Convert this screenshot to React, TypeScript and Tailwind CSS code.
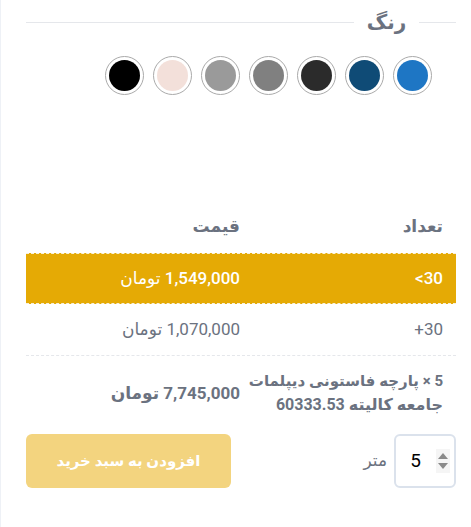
import React from 'react';

const swatches = ['#1e76c4', '#0f4b76', '#2b2b2b', '#808080', '#9a9a9a', '#f3e0da', '#000000'];

const App = () => {
  return (
    <div
      dir="rtl"
      className="w-[471px] h-[527px] bg-white border-l border-[#eef1f6] text-[#6b7280]"
      style={{ fontFamily: 'Roboto, "DejaVu Sans", sans-serif' }}
    >
      <div className="pr-[15px] pl-[25px] pt-[9px]">
        {/* Color heading */}
        <div className="flex items-center h-[26px]">
          <div className="w-[37px] h-px bg-[#e5e7eb]" />
          <span className="w-[65px] text-center text-[20px] font-bold text-[#6b7280] leading-none">رنگ</span>
          <div className="flex-1 h-px bg-[#e5e7eb]" />
        </div>

        {/* Swatches */}
        <div className="flex gap-[9px] pr-[24px] mt-[21px]">
          {swatches.map((c) => (
            <div
              key={c}
              className="w-[39px] h-[39px] rounded-full border border-[#aaaaaa] p-[3px] bg-white"
            >
              <div className="w-full h-full rounded-full" style={{ backgroundColor: c }} />
            </div>
          ))}
        </div>

        {/* Price table */}
        <div className="mt-[106px] text-[17px]">
          <div className="grid grid-cols-[203px_1fr] h-[52px] items-center font-bold text-[#6b7280]">
            <div className="pr-[13px]">تعداد</div>
            <div className="pr-[13px]">قیمت</div>
          </div>
          <div className="grid grid-cols-[203px_1fr] h-[51px] items-center bg-[#e5aa05] text-white font-medium border-y border-dashed border-[#f8f1dc]">
            <div className="pr-[13px]" dir="ltr" style={{ textAlign: 'right' }}>&lt;30</div>
            <div className="pr-[13px]">1,549,000 تومان</div>
          </div>
          <div className="grid grid-cols-[203px_1fr] h-[52px] items-center text-[#6b7280] border-b border-dashed border-[#e5e7eb]">
            <div className="pr-[13px]" dir="ltr" style={{ textAlign: 'right' }}>+30</div>
            <div className="pr-[13px]">1,070,000 تومان</div>
          </div>

          {/* Summary */}
          <div className="grid grid-cols-[203px_1fr] items-center pt-[13px] font-bold text-[#6b7280] leading-[24px]">
            <div className="pr-[13px] whitespace-nowrap text-[15px] tracking-[-0.4px]">
              5 × پارچه فاستونی دیپلمات
              <br />
              <span className="text-[16px] tracking-normal">جامعه کالیته 60333.53</span>
            </div>
            <div className="pr-[13px]">7,745,000 تومان</div>
          </div>
        </div>

        {/* Actions */}
        <div className="flex items-center mt-[17px]">
          <div className="w-[62px] h-[54px] rounded-md border-2 border-[#dbe2ec] flex items-center">
            <div className="w-[14px] mr-[4px] h-[24px] bg-[#f5f5f5] flex flex-col items-center justify-center gap-[4px]">
              <svg width="10" height="6" viewBox="0 0 10 6"><path d="M5 0L10 6H0z" fill="#8a8a8a" /></svg>
              <svg width="10" height="6" viewBox="0 0 10 6"><path d="M0 0h10L5 6z" fill="#8a8a8a" /></svg>
            </div>
            <span className="text-[19px] text-black mr-[15px]" style={{ fontFamily: 'Roboto, sans-serif' }}>5</span>
          </div>
          <span className="mr-[7px] text-[17px] text-[#6b7280]">متر</span>
          <button className="mr-auto w-[205px] h-[54px] rounded-md bg-[#f3d47f] text-white font-bold text-[15px]">
            افزودن به سبد خرید
          </button>
        </div>
      </div>
    </div>
  );
};

export default App;
